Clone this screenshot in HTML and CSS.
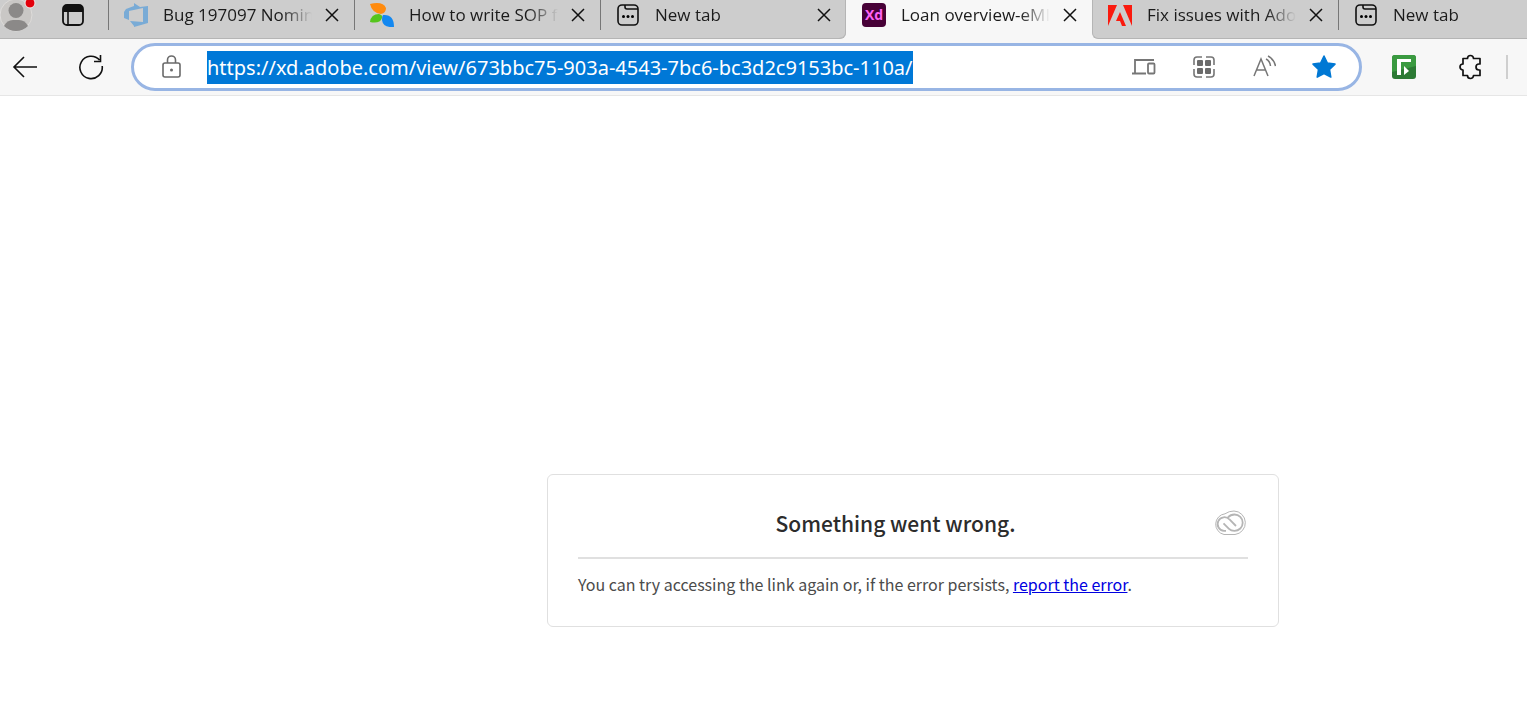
FILE: index.html
```html
<!DOCTYPE html>
<html lang="en">
<head>
    <meta charset="UTF-8">
    <meta name="viewport" content="width=device-width, initial-scale=1.0">
    <title>Loan overview</title>
    <link rel="stylesheet" href="styles.css">
</head>
<body>
    <svg class="symbols" aria-hidden="true">
        <symbol id="close" viewBox="0 0 14 14">
            <path d="M1 1l12 12M13 1L1 13" fill="none" stroke="#111" stroke-width="1.5"/>
        </symbol>
        <symbol id="newtab" viewBox="0 0 24 24">
            <rect x="2" y="2" width="20" height="20" rx="4" fill="none" stroke="#111" stroke-width="1.6"/>
            <path d="M9 2v2q0 2 2 2h11" fill="none" stroke="#111" stroke-width="1.6"/>
            <circle cx="7.500" cy="13.500" r="1.500"/><circle cx="12" cy="13.500" r="1.500"/><circle cx="16.500" cy="13.500" r="1.500"/>
        </symbol>
    </svg>

    <header>
        <div class="tab-bar">
            <div class="tab-group left">
                <div class="window-tools">
                    <button class="profile" aria-label="Profile">
                        <svg width="38" height="36" viewBox="0 0 38 36">
                            <circle cx="16" cy="18" r="16" fill="#c9c7c5" stroke="#dedcda"/>
                            <circle cx="16" cy="13.500" r="7.500" fill="#8b8988"/>
                            <path d="M4 29q3-6 9-6h6q6 0 9 6-5 5-12 5t-12-5z" fill="#8b8988"/>
                            <circle cx="30" cy="6" r="5" fill="#e3000b" stroke="#eee"/>
                        </svg>
                    </button>
                    <button class="workspaces" aria-label="Tab actions">
                        <svg width="24" height="24" viewBox="0 0 24 24">
                            <rect x="2" y="2" width="20" height="20" rx="4" fill="none" stroke="#111" stroke-width="1.8"/>
                            <path d="M2 9V6q0-4 4-4h12q4 0 4 4v3z" fill="#111"/>
                            <path d="M7 8v14" stroke="#111" stroke-width="1.6"/>
                        </svg>
                    </button>
                </div>
                <div class="tab">
                    <svg width="24" height="24" viewBox="0 0 24 24">
                        <path d="M0 9l2-3 8-3V0l6 4 8-1v17l-7 2-7 2v-1l-4-5 13 1V5L5 8v9l-5-2z" fill="#79abd6"/>
                    </svg>
                    <span class="title">Bug 197097 Nomin</span>
                    <button class="close" aria-label="Close tab"><svg width="14" height="14"><use href="#close"/></svg></button>
                </div>
                <div class="tab">
                    <svg width="24" height="24" viewBox="0 0 24 24">
                        <path d="M0 1q13-3 16 4 0 5-5 6Q2 10 0 1z" fill="#ff8b0f"/>
                        <path d="M0 19q1-8 9-8 4 1 3 4-2 6-12 4z" fill="#55c51d"/>
                        <path d="M13 12q11-1 11 12-11 1-12-7 0-4 1-5z" fill="#1388f0"/>
                    </svg>
                    <span class="title">How to write SOP f</span>
                    <button class="close" aria-label="Close tab"><svg width="14" height="14"><use href="#close"/></svg></button>
                </div>
                <div class="tab">
                    <svg width="24" height="24"><use href="#newtab"/></svg>
                    <span class="title">New tab</span>
                    <button class="close" aria-label="Close tab"><svg width="14" height="14"><use href="#close"/></svg></button>
                </div>
            </div>
            <div class="tab active">
                <span class="xd">Xd</span>
                <span class="title">Loan overview-eMI</span>
                <button class="close" aria-label="Close tab"><svg width="14" height="14"><use href="#close"/></svg></button>
            </div>
            <div class="tab-group right">
                <div class="tab">
                    <svg width="24" height="24" viewBox="0 0 24 24">
                        <path d="M0 2h9L0 23zM15 2h9v21zM12 9l6 14h-4l-2-5H8z" fill="#fa1a0e"/>
                    </svg>
                    <span class="title">Fix issues with Ado</span>
                    <button class="close" aria-label="Close tab"><svg width="14" height="14"><use href="#close"/></svg></button>
                </div>
                <div class="tab">
                    <svg width="24" height="24"><use href="#newtab"/></svg>
                    <span class="title">New tab</span>
                </div>
            </div>
        </div>

        <div class="toolbar">
            <button class="back" aria-label="Back">
                <svg width="26" height="24" viewBox="0 0 26 24" fill="none" stroke="#111" stroke-width="1.6">
                    <path d="M25 12H2M12 2L2 12l10 10"/>
                </svg>
            </button>
            <button class="reload" aria-label="Refresh">
                <svg width="26" height="26" viewBox="0 0 26 26" fill="none" stroke="#111" stroke-width="1.6">
                    <path d="M21.500 6A11.200 11.200 0 1 0 24.200 12M22.500 1v6.500H16"/>
                </svg>
            </button>
            <div class="address">
                <svg width="20" height="24" viewBox="0 0 20 24" fill="none" stroke="#6a6a6a" stroke-width="1.6">
                    <rect x="1" y="8" width="17" height="14" rx="2"/>
                    <path d="M5.500 8V5a4 4 0 0 1 8 0v3"/>
                    <circle cx="9.500" cy="15" r="1.500" fill="#6a6a6a" stroke="none"/>
                </svg>
                <input id="url" type="text" aria-label="Address" value="https://xd.adobe.com/view/673bbc75-903a-4543-7bc6-bc3d2c9153bc-110a/" spellcheck="false">
                <div class="actions">
                    <button aria-label="Devices">
                        <svg width="24" height="24" viewBox="0 0 24 24" fill="none" stroke="#767676" stroke-width="1.800">
                            <path d="M3 18V5h19M0 18.500h14"/>
                            <rect x="16" y="8.500" width="6.500" height="10" rx="1"/>
                        </svg>
                    </button>
                    <button aria-label="Apps">
                        <svg width="24" height="24" viewBox="0 0 24 24" fill="none" stroke="#767676" stroke-width="1.600">
                            <path d="M2 10V5q0-3 3-3h5M14 2h5q3 0 3 3v5M22 14v5q0 3-3 3h-5M10 22H5q-3 0-3-3v-5"/>
                            <g fill="#6b6b6b" stroke="none">
                                <rect x="5" y="5" width="6" height="6" rx="1"/><rect x="13" y="5" width="6" height="6" rx="1"/>
                                <rect x="5" y="13" width="6" height="6" rx="1"/><rect x="13" y="13" width="6" height="6" rx="1"/>
                            </g>
                        </svg>
                    </button>
                    <button aria-label="Read aloud">
                        <svg width="24" height="24" viewBox="0 0 24 24" fill="none" stroke="#767676" stroke-width="1.500">
                            <path d="M2 21L9 4l7 17M4.500 15h9M14 4q4 2 4.500 7M16 1q6 3 7.500 10"/>
                        </svg>
                    </button>
                    <button aria-label="Favorite">
                        <svg width="24" height="24" viewBox="0 0 24 24">
                            <path d="M12 1l3.400 7 7.600 1.100-5.500 5.400 1.300 7.600-6.800-3.600-6.800 3.600 1.300-7.600L1 9.100 8.600 8z" fill="#0078d4" stroke="#0078d4" stroke-linejoin="round" stroke-width="1.500"/>
                        </svg>
                    </button>
                </div>
            </div>
            <button class="extension" aria-label="Extension">
                <svg width="24" height="24" viewBox="0 0 24 24">
                    <rect width="24" height="24" rx="3" fill="#2c7a34"/>
                    <path d="M0 3q0-3 3-3h18q3 0 3 3v8L0 17z" fill="#3a9a40"/>
                    <path d="M5 4h14v3H9v13H5z" fill="#fff"/>
                    <path d="M12 11l5 5-5 4z" fill="#fff"/>
                </svg>
            </button>
            <button class="extensions" aria-label="Extensions">
                <svg width="24" height="26" viewBox="0 0 24 26" fill="none" stroke="#111" stroke-width="1.700" stroke-linejoin="round">
                    <path d="M5 4.500h4.500a3 3 0 0 1 6 0H22V10h-1a3 3 0 0 0 0 6h1v5.500h-6.500a3 3 0 0 1-6 0H5V16a3 3 0 0 1 0-6z"/>
                </svg>
            </button>
            <span class="divider"></span>
        </div>
    </header>

    <main>
        <section class="card">
            <div class="card-head">
                <h1>Something went wrong.</h1>
                <svg width="35" height="26" viewBox="0 0 35 26" fill="none" stroke="#b5b5b5">
                    <path d="M12 3.800Q16 1 21 1a11.800 11.800 0 0 1 1 23.500H11A10.500 10.500 0 0 1 12 3.800z"/>
                    <path d="M13 20.800h-2a6.800 6.800 0 1 1 5.500-11.300l6.500 6.500M15 7.300Q17.500 4.500 21.500 4.500a8.200 8.200 0 0 1 0 16.400q-3.500 0-5.500-2l-5.500-5.500" stroke-width="1.800"/>
                </svg>
            </div>
            <p>You can try accessing the link again or, if the error persists, <a href="#">report the error</a>.</p>
        </section>
    </main>

    <script>
        const url = document.getElementById('url');
        url.focus();
        url.select();
    </script>
</body>
</html>
```

FILE: styles.css
```css
* {
    box-sizing: border-box;
}

body {
    margin: 0;
    background: #fff;
    font-family: "Noto Sans", sans-serif;
    overflow-x: hidden;
}

button {
    display: flex;
    flex-shrink: 0;
    padding: 0;
    border: none;
    background: none;
    cursor: pointer;
}

svg {
    flex-shrink: 0;
}

.symbols {
    display: none;
}

.tab-bar {
    display: flex;
    height: 39px;
    background: #f7f7f7;
    overflow: hidden;
}

.tab-group {
    display: flex;
    background: #cdcdcd;
    border-bottom: 1px solid #b5b5b5;
    overflow: hidden;
}

.left {
    flex-shrink: 0;
    border-bottom-right-radius: 6px;
    box-shadow: inset -1px 0 #b5b5b5;
}

.right {
    flex: 1;
    border-left: 1px solid #b5b5b5;
    border-bottom-left-radius: 6px;
}

.window-tools {
    display: flex;
    align-items: center;
    gap: 23px;
    width: 108px;
    height: 30px;
}

.tab {
    display: flex;
    flex-shrink: 0;
    align-items: center;
    width: 246px;
    height: 30px;
    padding: 0 15px;
    border-left: 1px solid #777;
}

.active,
.right .tab:first-child {
    border-left-color: transparent;
}

.right .tab:first-child {
    width: 245px;
    padding-left: 14px;
}

.title {
    flex: 1;
    min-width: 0;
    margin: 0 13px 0 15px;
    font-family: "Open Sans", sans-serif;
    font-size: 17px;
    line-height: 30px;
    color: #1b1b1b;
    white-space: nowrap;
    overflow: hidden;
    mask-image: linear-gradient(to right, #000 80%, transparent);
}

.xd {
    width: 24px;
    border-radius: 4px;
    background: #470137;
    color: #ff61f6;
    font-family: "Open Sans", sans-serif;
    font-size: 14px;
    font-weight: 700;
    line-height: 24px;
    text-align: center;
}

.toolbar {
    display: flex;
    align-items: center;
    height: 57px;
    padding: 0 19px 0 12px;
    background: #f7f7f7;
    border-bottom: 1px solid #e6e6e6;
}

.reload {
    margin-left: 40px;
}

.address {
    display: flex;
    flex: 1;
    align-items: center;
    height: 48px;
    margin: 0 30px 0 27px;
    padding: 0 23px 0 28px;
    border: 3px solid #98b5e4;
    border-radius: 24px;
    background: #fff;
}

.address input {
    flex: 1;
    min-width: 0;
    height: 33px;
    margin-left: 25px;
    padding: 0;
    border: none;
    outline: none;
    background: none;
    font-family: "Noto Sans", sans-serif;
    font-size: 20px;
    line-height: 33px;
}

.address input::selection {
    background: #0078d7;
    color: #fff;
}

.actions {
    display: flex;
    gap: 36px;
}

.extensions {
    margin-left: 42px;
}

.divider {
    width: 2px;
    height: 24px;
    margin-left: 24px;
    background: #cfcfcf;
}

main {
    display: grid;
    grid-template-columns: 547fr 732fr 248fr;
    padding: 378px 0 40px;
}

.card {
    grid-column: 2;
    padding: 30px;
    border: 1px solid #e0e0e0;
    border-radius: 6px;
    font-family: "Noto Sans CJK SC", sans-serif;
}

.card-head {
    display: flex;
    align-items: center;
    padding-bottom: 16px;
    border-bottom: 2px solid #e0e0e0;
}

h1 {
    flex: 1;
    margin: 0;
    font-size: 21px;
    font-weight: 500;
    line-height: 36px;
    text-align: center;
    color: #2c2c2c;
}

.card p {
    margin: 13px 0 0;
    font-size: 16px;
    line-height: 24px;
    color: #4b4b4b;
}

.card a {
    color: #0000e0;
}
```
